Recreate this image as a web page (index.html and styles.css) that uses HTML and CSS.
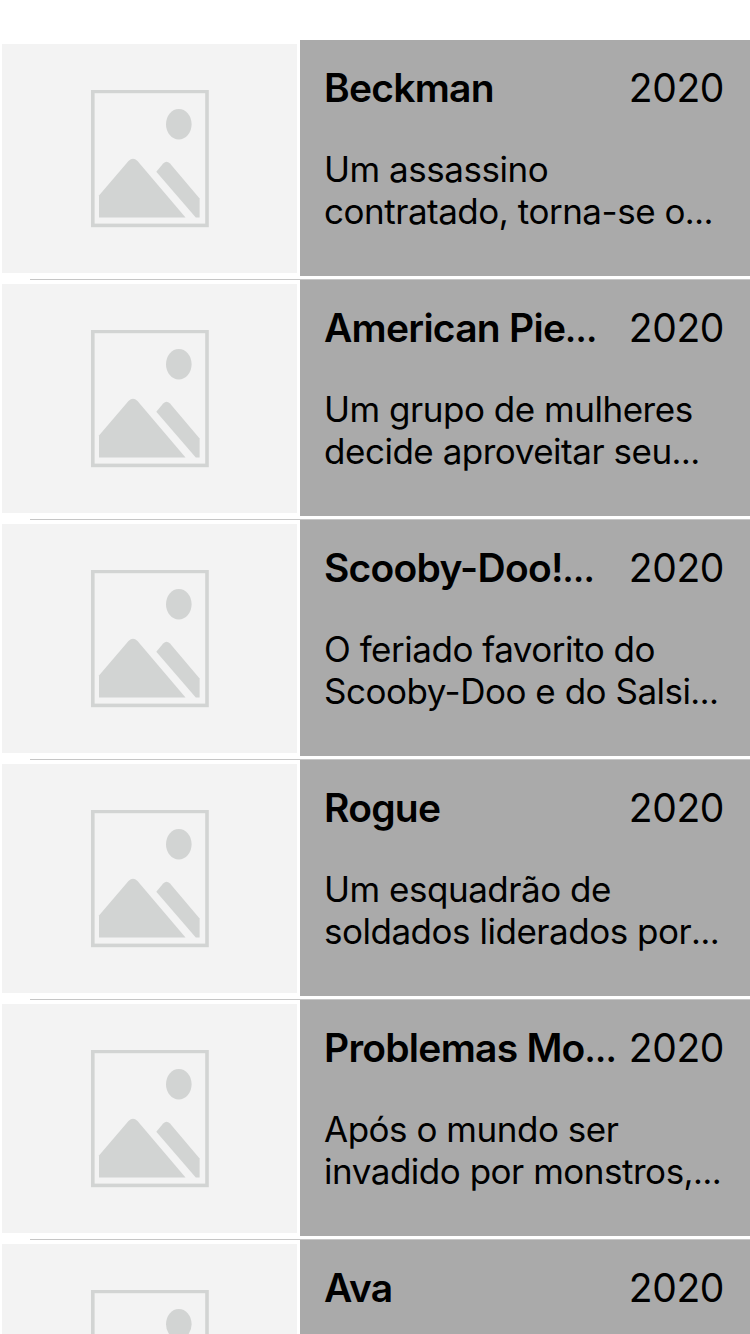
FILE: index.html
```html
<!DOCTYPE html>
<html lang="pt-BR">
<head>
<meta charset="utf-8">
<title>Filmes</title>
<link rel="stylesheet" href="styles.css">
</head>
<body>
<svg class="symbols" aria-hidden="true">
  <symbol id="placeholder" viewBox="0 0 118 138">
    <rect x="1.8" y="1.4" width="114.2" height="134" fill="none" stroke="#d2d4d3" stroke-width="3.6"/>
    <ellipse cx="87.8" cy="34.3" rx="12.8" ry="15.2" fill="#d2d4d3"/>
    <path fill="#d2d4d3" d="M8 127.500V105.500L37.500 71Q42 66.500 46.500 71L94.500 127.500Z"/>
    <path fill="#d2d4d3" d="M65.300 81.700L72.200 73.500Q75.500 70 79 73.500L108.600 108.500V127.500H104.800Z"/>
  </symbol>
</svg>
<main class="list">
  <article class="row">
    <div class="thumb"><svg class="icon"><use href="#placeholder"/></svg></div>
    <div class="info">
      <header class="head"><h2 class="title">Beckman</h2><span class="year">2020</span></header>
      <p class="overview">Um assassino<br>contratado, torna-se o<span class="more">…</span></p>
    </div>
  </article>
  <article class="row">
    <div class="thumb"><svg class="icon"><use href="#placeholder"/></svg></div>
    <div class="info">
      <header class="head"><h2 class="title">American Pie<span class="more">…</span></h2><span class="year">2020</span></header>
      <p class="overview">Um grupo de mulheres<br>decide aproveitar seu<span class="more">…</span></p>
    </div>
  </article>
  <article class="row">
    <div class="thumb"><svg class="icon"><use href="#placeholder"/></svg></div>
    <div class="info">
      <header class="head"><h2 class="title">Scooby-Doo!<span class="more">…</span></h2><span class="year">2020</span></header>
      <p class="overview">O feriado favorito do<br>Scooby-Doo e do Salsi<span class="more">…</span></p>
    </div>
  </article>
  <article class="row">
    <div class="thumb"><svg class="icon"><use href="#placeholder"/></svg></div>
    <div class="info">
      <header class="head"><h2 class="title">Rogue</h2><span class="year">2020</span></header>
      <p class="overview">Um esquadrão de<br>soldados liderados por<span class="more">…</span></p>
    </div>
  </article>
  <article class="row">
    <div class="thumb"><svg class="icon"><use href="#placeholder"/></svg></div>
    <div class="info">
      <header class="head"><h2 class="title">Problemas Mo<span class="more">…</span></h2><span class="year">2020</span></header>
      <p class="overview">Após o mundo ser<br>invadido por monstros,<span class="more">…</span></p>
    </div>
  </article>
  <article class="row">
    <div class="thumb"><svg class="icon"><use href="#placeholder"/></svg></div>
    <div class="info">
      <header class="head"><h2 class="title">Ava</h2><span class="year">2020</span></header>
    </div>
  </article>
</main>
</body>
</html>
```
FILE: styles.css
```css
* { box-sizing: border-box; }

body {
  margin: 0;
  height: 1334px;
  overflow: hidden;
  background: #fff;
  color: #000;
  font-family: Inter, "Liberation Sans", sans-serif;
}

.symbols { display: none; }

.list {
  padding-top: 40px;
  height: 1334px;
  overflow: hidden;
}

.row {
  display: flex;
  height: 240px;
  background: linear-gradient(#c6c6c6, #c6c6c6) 30px 239px / 720px 1px no-repeat;
}

.thumb {
  flex: none;
  width: 295px;
  height: 229px;
  margin: 4px 3px 0 2px;
  padding: 46px 0 0 89px;
  background: #f3f3f3;
}

.icon {
  display: block;
  width: 118px;
  height: 138px;
}

.info {
  flex: none;
  width: 450px;
  height: 236px;
  padding: 24px 26px 0 24px;
  background: #aaa;
}

.head {
  display: flex;
  justify-content: space-between;
  height: 48px;
  line-height: 48px;
  white-space: nowrap;
}

.title {
  margin: 0;
  font-size: 39px;
  font-weight: 600;
  letter-spacing: -0.75px;
}

.title .more {
  font-size: 30px;
  font-weight: 800;
  line-height: 1;
}

.year {
  font-size: 39px;
  letter-spacing: -0.4px;
}

.overview {
  margin: 36px 0 0;
  font-size: 35px;
  line-height: 42px;
  letter-spacing: -0.48px;
  white-space: nowrap;
}

.overview .more {
  font-size: 31px;
  font-weight: 500;
  line-height: 1;
}
```
